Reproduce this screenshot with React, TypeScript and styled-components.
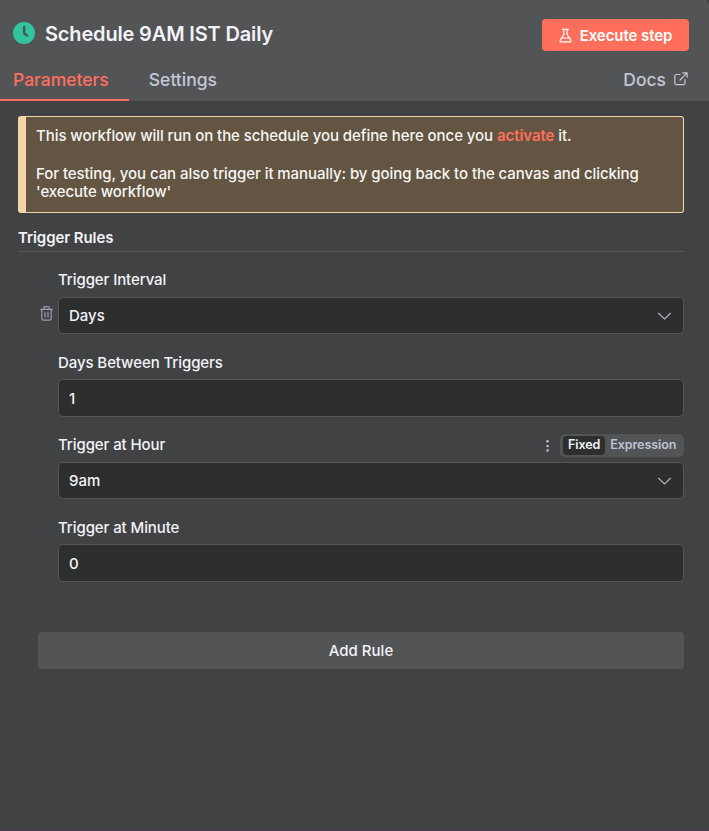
import React from "react";
import styled, { createGlobalStyle } from "styled-components";

const GlobalStyle = createGlobalStyle`
  * { box-sizing: border-box; }
  body {
    margin: 0;
    background: #414244;
    font-family: Inter, "Liberation Sans", sans-serif;
    -webkit-font-smoothing: antialiased;
  }
`;

const Panel = styled.main`
  width: 709px;
  height: 831px;
  background: #414244;
  color: #f2f3f8;
  border-bottom: 1px solid #45404b;
  overflow: hidden;
`;

const Header = styled.header`
  height: 101px;
  background: #535456;
  border-top-right-radius: 5px;
`;

const TitleRow = styled.div`
  display: flex;
  align-items: center;
  height: 69px;
  padding: 0 20px 0 13px;

  > svg { margin-bottom: 3px; }
`;

const Title = styled.h1`
  flex: 1;
  margin: 0 0 1px 10px;
  font-size: 20px;
  font-weight: 600;
  letter-spacing: -0.16px;
  line-height: 26px;
  white-space: nowrap;
`;

const ExecuteButton = styled.button`
  display: flex;
  align-items: center;
  justify-content: center;
  gap: 8px;
  width: 147px;
  height: 32px;
  margin-top: 1px;
  padding: 2px 0 0;
  border: 0;
  border-radius: 4px;
  background: #ff6f5c;
  color: #fff;
  font: 600 15px/20px Inter, sans-serif;
  letter-spacing: -0.08px;
  white-space: nowrap;
`;

const Tabs = styled.nav`
  display: flex;
  height: 32px;
  padding-right: 21px;
`;

const Tab = styled.a<{ $active?: boolean }>`
  height: 32px;
  padding: 0 20px 0 ${(p) => (p.$active ? "13px" : "20px")};
  border-bottom: 2px solid ${(p) => (p.$active ? "#ff6f5c" : "transparent")};
  color: ${(p) => (p.$active ? "#ff6f5c" : "#c3c7d6")};
  font-size: 17.5px;
  font-weight: 500;
  line-height: 22px;
  white-space: nowrap;
`;

const DocsLink = styled.a`
  display: flex;
  gap: 8px;
  margin-left: auto;
  color: #c3c7d6;
  font-size: 17.5px;
  font-weight: 500;
  line-height: 22px;

  svg { margin-top: 3px; }
`;

const Content = styled.section`
  padding: 15px 25px 0 18px;
`;

const Notice = styled.aside`
  height: 97px;
  padding: 10px 30px 0 10px;
  border: 1px solid #f4d6a4;
  border-left-width: 8px;
  border-radius: 3px;
  background: #635541;
  color: #f6f5f5;
  font-size: 15px;
  font-weight: 500;
  letter-spacing: -0.065px;
  line-height: 18px;

  p { margin: 0 0 20px; }
`;

const Accent = styled.a`
  color: #ff6f5c;
  font-weight: 600;
`;

const SectionTitle = styled.h2`
  height: 39px;
  margin: 0;
  padding-top: 16px;
  border-bottom: 1px solid #56585a;
  font-size: 15px;
  font-weight: 600;
  letter-spacing: -0.08px;
  line-height: 18px;
`;

const Rule = styled.div`
  display: grid;
  grid-template-columns: 40px 1fr;
  padding-top: 18px;
`;

const DeleteButton = styled.button`
  align-self: start;
  width: 20px;
  height: 18px;
  margin: 34px 0 0 18px;
  padding: 0;
  border: 0;
  background: none;
  color: #9a9dab;

  svg { display: block; margin: 0 auto; }
`;

const Fields = styled.div`
  display: grid;
  grid-template-rows: 83px 82px 83px 82px;
`;

const LabelRow = styled.div<{ $compact?: boolean }>`
  display: flex;
  align-items: center;
  height: ${(p) => (p.$compact ? "26px" : "27px")};
`;

const Label = styled.label`
  align-self: flex-start;
  flex: 1;
  font-size: 15px;
  font-weight: 500;
  letter-spacing: -0.09px;
  line-height: 20px;
`;

const Control = styled.div<{ $tall?: boolean }>`
  display: flex;
  align-items: center;
  justify-content: space-between;
  height: ${(p) => (p.$tall ? "38px" : "37px")};
  padding: ${(p) => (p.$tall ? "2px" : "0")} 11px 0 10px;
  border: 1px solid #535656;
  border-radius: 5px;
  background: #2d2f2e;
  font-size: 15px;
  font-weight: 500;
  line-height: 20px;
`;

const Toggle = styled.div`
  display: flex;
  align-items: center;
  width: 124px;
  height: 23px;
  margin: -7px 0 0 11px;
  padding: 0 3px;
  border-radius: 5px;
  background: #535456;
`;

const ToggleOption = styled.button<{ $selected?: boolean }>`
  height: 19px;
  padding: 0 5px 1px;
  border: 0;
  border-radius: 4px;
  background: ${(p) => (p.$selected ? "#2d2f2e" : "transparent")};
  color: ${(p) => (p.$selected ? "#f2f3f8" : "#bec3d3")};
  font: 600 12.5px/18px Inter, sans-serif;
  letter-spacing: -0.08px;
`;

const MoreIcon = styled.svg`
  display: block;
  margin-top: -7px;
`;

const AddButton = styled.button`
  display: block;
  width: 646px;
  height: 37px;
  margin: 32px 0 0 20px;
  padding: 0;
  border: 0;
  border-radius: 4px;
  background: #535456;
  color: #f2f3f8;
  font: 500 15px/20px Inter, sans-serif;
`;

const ClockIcon = () => (
  <svg width="22" height="22" viewBox="0 0 22 22">
    <circle cx="11" cy="11" r="11" fill="#31c49f" />
    <path d="M11.2 5V11.5L14 13.5" fill="none" stroke="#4a5554" strokeWidth="2.3" strokeLinecap="round" strokeLinejoin="round" />
  </svg>
);

const FlaskIcon = () => (
  <svg width="13" height="16" viewBox="0 0 13 16" fill="none" stroke="currentColor" strokeWidth="1.2" strokeLinecap="round" strokeLinejoin="round">
    <path d="M3.7 1.4h5.6M4.9 1.4v5.1L1.3 11.8c-.7 1.3-.1 2.1 1 2.1h8.4c1.1 0 1.7-.8 1-2.1L8.1 6.5V1.4M2.9 10H10.1" />
  </svg>
);

const ExternalIcon = () => (
  <svg width="14" height="14" viewBox="0 0 14 14" fill="none" stroke="currentColor" strokeWidth="1.2" strokeLinecap="round" strokeLinejoin="round">
    <path d="M8.8.9h4.3v4.3M12.9 1.1 6 8M6.1 2.5H2.6C1.5 2.5.8 3.2.8 4.3v6.6c0 1.1.7 1.8 1.8 1.8h6.6c1.1 0 1.8-.7 1.8-1.8V7.5" />
  </svg>
);

const TrashIcon = () => (
  <svg width="13" height="15" viewBox="0 0 13 15" fill="none" stroke="currentColor" strokeWidth="1.2" strokeLinecap="round" strokeLinejoin="round">
    <path d="M.7 3.4h11.6M3.8 3.1V1.8c0-.7.4-1.1 1.1-1.1h3.2c.7 0 1.1.4 1.1 1.1v1.3M1.8 3.6v8.8c0 1.1.6 1.7 1.7 1.7h6c1.1 0 1.7-.6 1.7-1.7V3.6M5 6.5v4.4M8 6.5v4.4" />
  </svg>
);

const ChevronIcon = () => (
  <svg width="15" height="10" viewBox="0 0 15 10" fill="none" stroke="#b2b5c1" strokeWidth="1.1">
    <path d="m1.3 2 6.2 6 6.2-6" />
  </svg>
);

const ParameterMode = () => (
  <>
    <MoreIcon width="3" height="13" viewBox="0 0 3 13" fill="#bec3d3">
      <circle cx="1.5" cy="2.3" r="1.25" />
      <circle cx="1.5" cy="6.9" r="1.25" />
      <circle cx="1.5" cy="11.5" r="1.25" />
    </MoreIcon>
    <Toggle>
      <ToggleOption $selected>Fixed</ToggleOption>
      <ToggleOption>Expression</ToggleOption>
    </Toggle>
  </>
);

type FieldProps = { label: string; value: string; select?: boolean; actions?: boolean };

const Field = ({ label, value, select, actions }: FieldProps) => (
  <div>
    <LabelRow $compact={!select}>
      <Label>{label}</Label>
      {actions && <ParameterMode />}
    </LabelRow>
    <Control $tall={!select}>
      <span>{value}</span>
      {select && <ChevronIcon />}
    </Control>
  </div>
);

export default function App() {
  return (
    <>
      <GlobalStyle />
      <Panel>
        <Header>
          <TitleRow>
            <ClockIcon />
            <Title>Schedule 9AM IST Daily</Title>
            <ExecuteButton><FlaskIcon />Execute step</ExecuteButton>
          </TitleRow>
          <Tabs>
            <Tab $active>Parameters</Tab>
            <Tab>Settings</Tab>
            <DocsLink>Docs<ExternalIcon /></DocsLink>
          </Tabs>
        </Header>
        <Content>
          <Notice>
            <p>This workflow will run on the schedule you define here once you <Accent>activate</Accent> it.</p>
            <p>For testing, you can also trigger it manually: by going back to the canvas and clicking 'execute workflow'</p>
          </Notice>
          <SectionTitle>Trigger Rules</SectionTitle>
          <Rule>
            <DeleteButton aria-label="Delete rule"><TrashIcon /></DeleteButton>
            <Fields>
              <Field label="Trigger Interval" value="Days" select />
              <Field label="Days Between Triggers" value="1" />
              <Field label="Trigger at Hour" value="9am" select actions />
              <Field label="Trigger at Minute" value="0" />
            </Fields>
          </Rule>
          <AddButton>Add Rule</AddButton>
        </Content>
      </Panel>
    </>
  );
}
